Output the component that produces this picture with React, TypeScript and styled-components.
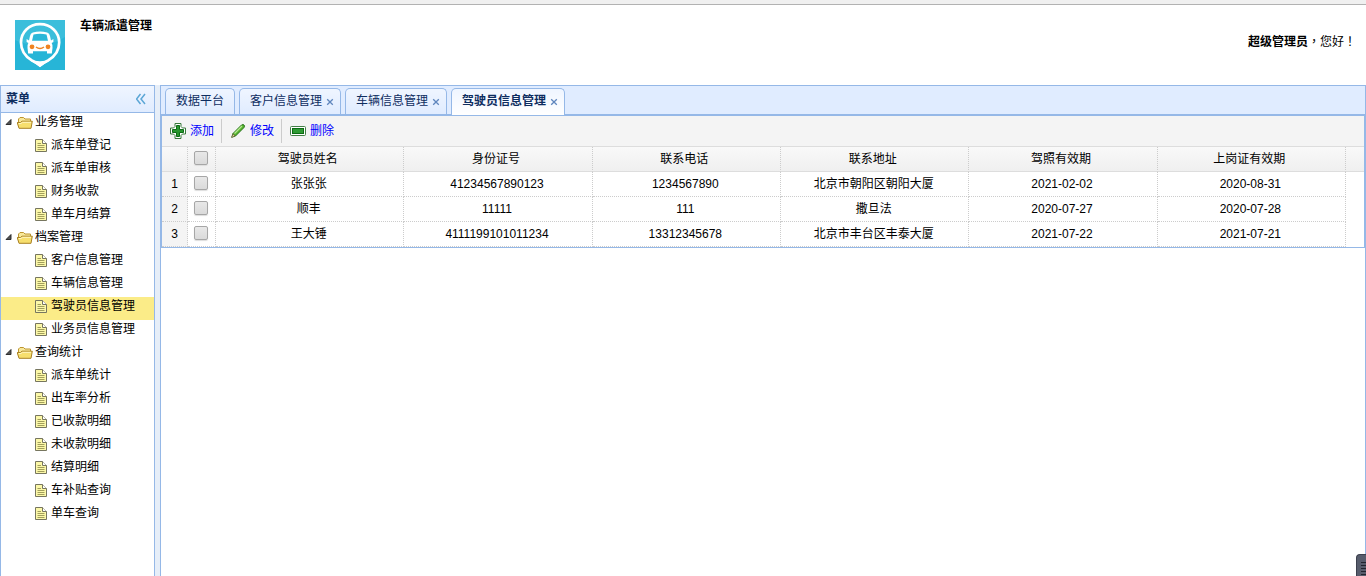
import React from "react";
import styled, { createGlobalStyle, css } from "styled-components";

const GlobalStyle = createGlobalStyle`
  * { box-sizing: border-box; }
  body {
    margin: 0;
    background: #fff;
    color: #000;
    font: 12px/18px "Liberation Sans", "Noto Sans CJK SC", sans-serif;
  }
  button, input { font: inherit; color: inherit; margin: 0; }
  svg { display: block; flex: none; }
`;

const line = "#95b8e7";

const Page = styled.div`
  display: flex;
  flex-direction: column;
  min-height: 100vh;
`;

const TopStrip = styled.div`
  height: 5px;
  background: #f0f0f0;
  border-bottom: 1px solid #b2b2b2;
`;

const Header = styled.header`
  display: flex;
  align-items: flex-start;
  height: 80px;
  padding: 15px 10px 0 15px;
`;

const Title = styled.h1`
  flex: 1;
  margin: -3px 0 0 15px;
  font-size: 12px;
  line-height: 18px;
`;

const Greeting = styled.div`
  margin-top: 12px;
`;

const Punctuation = styled.span`
  font-family: "Noto Sans CJK TC", sans-serif;
`;

const Body = styled.div`
  display: flex;
  flex: 1;
  background: #e6eef8;
  gap: 5px;
`;

const Sidebar = styled.aside`
  width: 155px;
  flex: none;
  background: #fff;
  border: 1px solid ${line};
  border-bottom: 0;
`;

const PanelHeader = styled.div`
  display: flex;
  align-items: center;
  justify-content: space-between;
  height: 27px;
  padding: 0 8px 0 5px;
  border-bottom: 1px solid ${line};
  background: linear-gradient(to bottom, #eff5ff, #e0ecff);
  color: #0e2d5f;
  font-weight: bold;
`;

const IconButton = styled.button`
  display: flex;
  padding: 0;
  border: 0;
  background: none;
  cursor: pointer;
`;

const Tree = styled.ul`
  margin: 0;
  padding: 0;
  list-style: none;
`;

const TreeRow = styled.a<{ $leaf?: boolean; $active?: boolean }>`
  display: flex;
  align-items: flex-start;
  height: 23px;
  padding-left: ${(p) => (p.$leaf ? 32 : 4)}px;
  background: ${(p) => (p.$active ? "#fbec88" : "none")};
  color: #000;
  text-decoration: none;
  white-space: nowrap;
`;

const Main = styled.main`
  flex: 1;
  min-width: 0;
  background: #fff;
  border: 1px solid ${line};
  border-bottom: 0;
`;

const TabBar = styled.div`
  display: flex;
  align-items: flex-start;
  gap: 4px;
  height: 30px;
  padding: 2px 4px 0;
  background: #e0ecff;
  border-bottom: 2px solid ${line};
`;

const Tab = styled.div<{ $active?: boolean; $closable?: boolean }>`
  display: flex;
  align-items: center;
  gap: 4px;
  height: ${(p) => (p.$active ? 27 : 26)}px;
  padding: 0 ${(p) => (p.$closable ? 6 : 10)}px 0 10px;
  border: 1px solid ${line};
  border-bottom: 0;
  border-radius: 5px 5px 0 0;
  background: linear-gradient(to bottom, #eff5ff, #e0ecff);
  ${(p) => p.$active && css`
    background: linear-gradient(to bottom, #eff5ff, #fff);
    font-weight: bold;
  `}
`;

const TabLabel = styled.button`
  padding: 0 0 2px;
  border: 0;
  background: none;
  color: #0e2d5f;
  white-space: nowrap;
  cursor: pointer;
`;

const Grid = styled.section`
  border: 1px solid ${line};
  border-top: 0;
`;

const Toolbar = styled.div`
  display: flex;
  align-items: center;
  height: 31px;
  padding-left: 4px;
  background: #f4f4f4;
  border-bottom: 1px solid #ddd;
`;

const ToolButton = styled.button`
  display: flex;
  align-items: center;
  gap: 4px;
  height: 26px;
  padding: 0 7px 0 4px;
  border: 0;
  background: none;
  color: #00f;
  cursor: pointer;
`;

const ToolSeparator = styled.span`
  width: 1px;
  height: 24px;
  margin-right: 4px;
  background: #ccc;
`;

const Table = styled.table`
  width: 100%;
  table-layout: fixed;
  border-collapse: separate;
  border-spacing: 0;
`;

const HeadCell = styled.th`
  height: 25px;
  padding: 0 4px 1px 0;
  border-right: 1px dotted #ccc;
  border-bottom: 1px solid #ddd;
  font-weight: normal;
  &:last-child { border-right: 0; }
`;

const HeadRow = styled.tr`
  background: linear-gradient(to bottom, #f9f9f9, #efefef);
`;

const Cell = styled.td<{ $number?: boolean }>`
  height: 25px;
  padding: 0 ${(p) => (p.$number ? 0 : 2)}px 1px 0;
  border-right: 1px dotted #ccc;
  border-bottom: 1px dotted #ccc;
  text-align: center;
  background: ${(p) => (p.$number ? "#f4f4f4" : "none")};
  &:last-child { border-width: 0; }
`;

const Check = styled.input.attrs({ type: "checkbox" })`
  appearance: none;
  display: block;
  width: 14px;
  height: 14px;
  margin: 0 0 1px 6px;
  border: 1px solid #a6a6a6;
  border-radius: 2px;
  background: linear-gradient(to bottom, #e8e8e8, #dadada);
  box-shadow: 0 1px 1px #ddd;
  &:checked { background: #6a8fc0; }
`;

const FloatingHandle = styled.button`
  position: fixed;
  right: 0;
  bottom: 0;
  width: 10px;
  height: 22px;
  padding: 7px 0 0 4px;
  border: 1px solid #3c404e;
  border-width: 1px 0 0 1px;
  border-radius: 4px 0 0 0;
  background: #575c6c;
  overflow: hidden;
`;

const Logo = () => (
  <svg width="50" height="50" viewBox="0 0 50 50" role="img" aria-label="车辆派遣">
    <rect width="50" height="50" fill="#27b5d7" />
    <path d="M0 0H50V17Q38 25 24 25T0 20Z" fill="#3bbedb" />
    <path d="M25 4.2C14 4.2 6 12 6 22.5C6 31 10.5 36.5 16.5 40.2Q21.5 42.500 25 45.500Q28.500 42.500 33.500 40.200C39.500 36.500 44.200 31 44.200 22.500C44.200 12 36 4.200 25 4.200Z" fill="none" stroke="#fff" strokeWidth="2.700" />
    <path d="M14 39.500Q25 43 36 39.500L25 47Z" fill="#fff" />
    <path d="M17.800 12.500Q25 10.500 32.200 12.500Q34.500 13 35 16L36 20.500L38.400 19V22L36.600 23Q38 25 37.500 28L36.800 33.500H32V31.300H18V33.500H13.200L12.500 28Q12 25 13.400 23L11.600 22V19L14 20.500L15 16Q15.500 13 17.800 12.500Z" fill="#fff" />
    <path d="M18.500 14.500Q25 13 31.500 14.500L33 20.800H17Z" fill="#2bb7d8" />
    <circle cx="17" cy="26.800" r="2.400" fill="#f08321" />
    <circle cx="33" cy="26.800" r="2.400" fill="#f08321" />
    <path d="M21 27Q25 30 29 27" fill="none" stroke="#f08321" strokeWidth="1.500" />
  </svg>
);

const Collapse = () => (
  <svg width="10" height="12" viewBox="0 0 10 12" fill="none" stroke="#5ba6d6" strokeWidth="1.500">
    <path d="M4.500 1L.5 6L4.500 11M9 1L5 6L9 11" />
  </svg>
);

const Expander = () => (
  <svg width="12" height="18" viewBox="0 0 12 18">
    <path d="M6 6.500V11.500H1Z" fill="#555" stroke="#222" strokeWidth=".9" />
  </svg>
);

const Folder = () => (
  <svg width="18" height="18" viewBox="1 0 18 18">
    <path d="M2.500 14V6L4 4.500H7.500L9 6H14.500V8.500" fill="#f8e89a" stroke="#bd952f" />
    <path d="M3 15.300L1.200 9.500H4.500L6 8.200H16.300L15 15.300Z" fill="#f7df6e" stroke="#a98124" strokeLinejoin="round" />
    <path d="M2.800 10.500H5L6.500 9.300H15" fill="none" stroke="#fff6c4" />
  </svg>
);

const FileIcon = () => (
  <svg width="18" height="18" viewBox="1 0 18 18">
    <path d="M3.500 3.500H10.500L14.500 7.500V15.500H3.500Z" fill="#fcf8a8" stroke="#77765f" />
    <path d="M10.500 3.500V7.500H14.500" fill="#fff" stroke="#77765f" />
    <path d="M5.500 7.500H9M5.500 9.500H12.500M5.500 11.500H12.500M5.500 13.500H12.500" stroke="#a29f5c" />
  </svg>
);

const AddIcon = () => (
  <svg width="16" height="16" viewBox="0 0 16 16">
    <path d="M5 .5H11V3.500L12.500 5H15.500V11H12.500L11 12.500V15.500H5V12.500L3.500 11H.5V5H3.500L5 3.500Z" fill="#fff" stroke="#39793b" />
    <path d="M6.500 2.500H9.500V6.500H13.500V9.500H9.500V13.500H6.500V9.500H2.500V6.500H6.500Z" fill="#27962d" stroke="#0c6b14" />
  </svg>
);

const EditIcon = () => (
  <svg width="16" height="16" viewBox="0 0 16 16">
    <path d="M2 14L3 10.500L11.500 2Q13 1 14 2Q15 3 14 4.500L5.500 13Z" fill="#56b52d" stroke="#28721c" />
    <path d="M4.500 10.500L12 3" stroke="#b8e892" strokeWidth="1.200" />
    <path d="M1.500 14.500L3 10.800L5.200 13Z" fill="#e7cf9b" stroke="#4b5a25" strokeWidth=".7" />
  </svg>
);

const RemoveIcon = () => (
  <svg width="16" height="16" viewBox="0 0 16 16">
    <rect x=".5" y="3.500" width="15" height="9" rx="1" fill="#fff" stroke="#437f47" />
    <rect x="2.500" y="5.500" width="11" height="5" fill="#2f9b34" stroke="#0c6b14" />
  </svg>
);

const CloseIcon = () => (
  <svg width="8" height="8" viewBox="0 0 8 8">
    <path d="M1.200 1.200L6.800 6.800M6.800 1.200L1.200 6.800" stroke="#5f86bd" strokeWidth="1.300" />
  </svg>
);

const menu = [
  { name: "业务管理", items: ["派车单登记", "派车单审核", "财务收款", "单车月结算"] },
  { name: "档案管理", items: ["客户信息管理", "车辆信息管理", "驾驶员信息管理", "业务员信息管理"] },
  { name: "查询统计", items: ["派车单统计", "出车率分析", "已收款明细", "未收款明细", "结算明细", "车补贴查询", "单车查询"] },
];

const current = "驾驶员信息管理";
const tabs = ["数据平台", "客户信息管理", "车辆信息管理", current];
const columns = ["驾驶员姓名", "身份证号", "联系电话", "联系地址", "驾照有效期", "上岗证有效期"];
const drivers = [
  ["张张张", "41234567890123", "1234567890", "北京市朝阳区朝阳大厦", "2021-02-02", "2020-08-31"],
  ["顺丰", "11111", "111", "撒旦法", "2020-07-27", "2020-07-28"],
  ["王大锤", "4111199101011234", "13312345678", "北京市丰台区丰泰大厦", "2021-07-22", "2021-07-21"],
];

export default function App() {
  return (
    <Page>
      <GlobalStyle />
      <TopStrip />
      <Header>
        <Logo />
        <Title>车辆派遣管理</Title>
        <Greeting>
          <b>超级管理员</b><Punctuation>，</Punctuation>您好<Punctuation>！</Punctuation>
        </Greeting>
      </Header>
      <Body>
        <Sidebar>
          <PanelHeader>
            菜单
            <IconButton aria-label="收起菜单"><Collapse /></IconButton>
          </PanelHeader>
          <Tree>
            {menu.map((group) => (
              <li key={group.name}>
                <TreeRow href="#"><Expander /><Folder />{group.name}</TreeRow>
                <Tree>
                  {group.items.map((item) => (
                    <li key={item}>
                      <TreeRow href="#" $leaf $active={item === current}><FileIcon />{item}</TreeRow>
                    </li>
                  ))}
                </Tree>
              </li>
            ))}
          </Tree>
        </Sidebar>
        <Main>
          <TabBar>
            {tabs.map((tab, i) => (
              <Tab key={tab} $active={tab === current} $closable={i > 0}>
                <TabLabel>{tab}</TabLabel>
                {i > 0 && <IconButton aria-label={`关闭${tab}`}><CloseIcon /></IconButton>}
              </Tab>
            ))}
          </TabBar>
          <Grid>
            <Toolbar>
              <ToolButton><AddIcon />添加</ToolButton>
              <ToolSeparator />
              <ToolButton><EditIcon />修改</ToolButton>
              <ToolSeparator />
              <ToolButton><RemoveIcon />删除</ToolButton>
            </Toolbar>
            <Table>
              <colgroup>
                <col style={{ width: 26 }} />
                <col style={{ width: 28 }} />
                {columns.map((c) => <col key={c} />)}
                <col style={{ width: 18 }} />
              </colgroup>
              <thead>
                <HeadRow>
                  <HeadCell />
                  <HeadCell><Check aria-label="全选" /></HeadCell>
                  {columns.map((c) => <HeadCell key={c} scope="col">{c}</HeadCell>)}
                  <HeadCell />
                </HeadRow>
              </thead>
              <tbody>
                {drivers.map((row, i) => (
                  <tr key={row[1]}>
                    <Cell $number>{i + 1}</Cell>
                    <Cell><Check aria-label={`选择${row[0]}`} /></Cell>
                    {row.map((value, c) => <Cell key={c}>{value}</Cell>)}
                    <Cell />
                  </tr>
                ))}
              </tbody>
            </Table>
          </Grid>
        </Main>
      </Body>
      <FloatingHandle aria-label="打开工具">
        <svg width="5" height="16" viewBox="0 0 5 16">
          <path d="M0 .5H5M0 3.500H5M0 6.500H5M0 9.500H5M0 12.500H5" stroke="#22252f" />
          <path d="M0 14.500H5" stroke="#f3d34a" />
        </svg>
      </FloatingHandle>
    </Page>
  );
}
